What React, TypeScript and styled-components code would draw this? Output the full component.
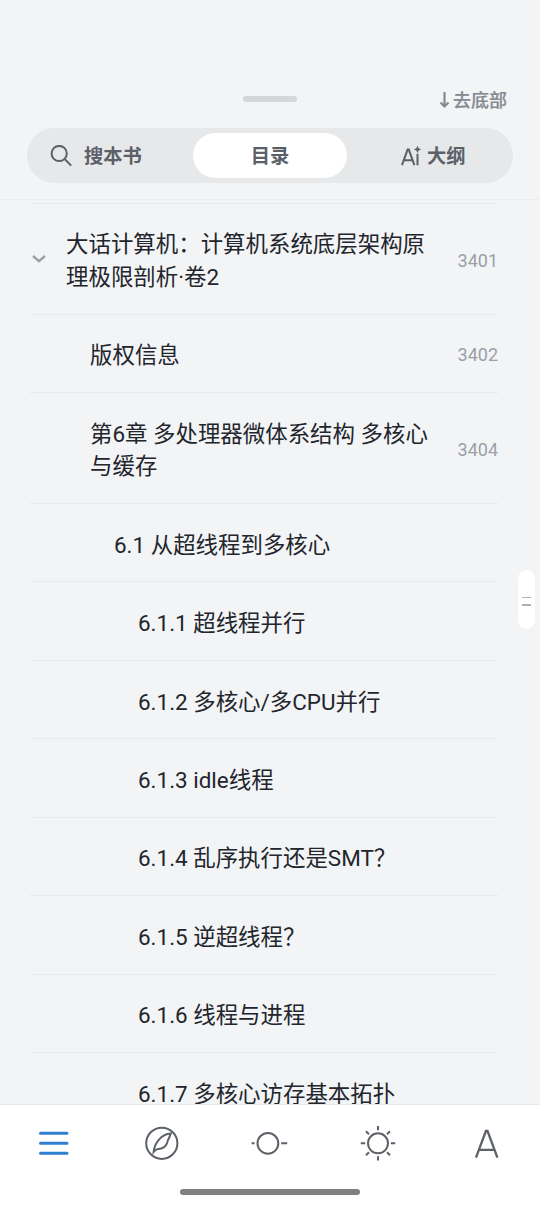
import React from 'react';
import styled, { createGlobalStyle } from 'styled-components';

const GlobalStyle = createGlobalStyle`
  * { box-sizing: border-box; }
  html, body { margin: 0; padding: 0; }
  body {
    background: #f3f4f6;
    font-family: Roboto, "Noto Sans CJK SC", sans-serif;
    -webkit-font-smoothing: antialiased;
  }
`;

const Screen = styled.div`
  position: relative;
  display: flex;
  flex-direction: column;
  width: 540px;
  height: 1206px;
  overflow: hidden;
  background: #f3f4f6;
`;

const Header = styled.header`
  flex: none;
  height: 200px;
  padding: 85px 27px 0;
  border-bottom: 1px solid #ebecee;
`;

const TopBar = styled.div`
  display: grid;
  grid-template-columns: 1fr 54px 1fr;
  align-items: center;
  height: 28px;
`;

const Grabber = styled.span`
  grid-column: 2;
  height: 6px;
  margin-top: -2px;
  border-radius: 3px;
  background: #d5d6d8;
`;

const ToBottom = styled.button`
  justify-self: end;
  display: flex;
  align-items: center;
  gap: 3px;
  margin: 0 6px 0 0;
  padding: 0;
  border: 0;
  background: none;
  color: #858a92;
  font: 500 18px/28px Roboto, "Noto Sans CJK SC", sans-serif;
  -webkit-text-stroke: 0.2px currentColor;
`;

const ArrowIcon = styled.svg`
  width: 11px;
  height: 18px;
  margin-top: -1px;
`;

const Tabs = styled.nav`
  display: grid;
  grid-template-columns: 166px 154px 1fr;
  grid-template-rows: 45px;
  height: 55px;
  margin-top: 15px;
  padding: 5px 0;
  border-radius: 28px;
  background: #e7e8ea;
`;

const Tab = styled.button<{ $active?: boolean; $inset?: number; $gap?: number }>`
  display: flex;
  align-items: center;
  justify-content: ${(p) => (p.$active ? 'center' : 'flex-start')};
  gap: ${(p) => p.$gap ?? 0}px;
  padding: 0 0 0 ${(p) => p.$inset ?? 0}px;
  border: 0;
  border-radius: 23px;
  background: ${(p) => (p.$active ? '#fff' : 'transparent')};
  color: #5b6069;
  font: 700 19.3px/30px Roboto, "Noto Sans CJK SC", sans-serif;
`;

const TabLabel = styled.span`
  padding-top: 2px;
`;

const List = styled.main`
  flex: 1;
  min-height: 0;
  overflow: hidden;
  padding: 2.6px 42px 0 30px;
`;

const Row = styled.div<{ $level: number }>`
  display: flex;
  align-items: center;
  padding: 24.6px 0 20.38px ${(p) => 36 + p.$level * 24}px;
  border-top: 1px solid #e8e9ec;
`;

const Title = styled.span`
  width: 0;
  flex: 1;
  margin-right: 24px;
  color: #22252c;
  font-size: 22.45px;
  line-height: 32.5px;
`;

const PageNumber = styled.span`
  flex: none;
  width: 42px;
  text-align: right;
  color: #9b9fa8;
  font-size: 18px;
  line-height: 24px;
`;

const Chevron = styled.svg`
  flex: none;
  width: 18px;
  height: 12px;
  margin: -3px 18px 0 -36px;
`;

const Footer = styled.footer`
  flex: none;
  display: flex;
  flex-direction: column;
  align-items: center;
  height: 102px;
  border-top: 1px solid #e7e8ea;
  background: #fff;
`;

const Tools = styled.nav`
  display: flex;
  justify-content: space-between;
  width: 100%;
  padding: 18px 34px 0 32px;
`;

const ToolIcon = styled.svg`
  width: 40px;
  height: 40px;
  fill: none;
  stroke: #5d6168;
  stroke-width: 2;
  overflow: visible;
`;

const HomeBar = styled.span`
  width: 180px;
  height: 6px;
  margin-top: 26px;
  border-radius: 3px;
  background: #808080;
`;

const ScrollThumb = styled.div`
  position: absolute;
  top: 570px;
  left: 518px;
  display: flex;
  flex-direction: column;
  align-items: center;
  justify-content: center;
  gap: 6px;
  width: 17px;
  height: 59px;
  padding-top: 3px;
  border-radius: 8.5px;
  background: #fff;
`;

const ThumbLine = styled.span`
  width: 9px;
  height: 1.5px;
  background: #adb0b4;
`;

const chapters: { level: number; title: string; page?: number; open?: boolean }[] = [
  { level: 0, title: '大话计算机：计算机系统底层架构原理极限剖析·卷2', page: 3401, open: true },
  { level: 1, title: '版权信息', page: 3402 },
  { level: 1, title: '第6章 多处理器微体系结构 多核心与缓存', page: 3404 },
  { level: 2, title: '6.1 从超线程到多核心' },
  { level: 3, title: '6.1.1 超线程并行' },
  { level: 3, title: '6.1.2 多核心/多CPU并行' },
  { level: 3, title: '6.1.3 idle线程' },
  { level: 3, title: '6.1.4 乱序执行还是SMT？' },
  { level: 3, title: '6.1.5 逆超线程？' },
  { level: 3, title: '6.1.6 线程与进程' },
  { level: 3, title: '6.1.7 多核心访存基本拓扑' },
];

export default function App() {
  return (
    <Screen>
      <GlobalStyle />
      <Header>
        <TopBar>
          <Grabber />
          <ToBottom>
            <ArrowIcon viewBox="0 0 11 18" fill="none" stroke="currentColor" strokeWidth="2.2">
              <path d="M5.5 1v14.5M1.5 11.5l4 4 4-4" />
            </ArrowIcon>
            <TabLabel>去底部</TabLabel>
          </ToBottom>
        </TopBar>
        <Tabs>
          <Tab $inset={23} $gap={12}>
            <svg width="22" height="22" viewBox="0 0 22 22" fill="none" stroke="currentColor" strokeWidth="2">
              <circle cx="9.2" cy="8.5" r="7.6" />
              <path d="M14.6 14l6.6 6.6" />
            </svg>
            <TabLabel>搜本书</TabLabel>
          </Tab>
          <Tab $active>
            <TabLabel>目录</TabLabel>
          </Tab>
          <Tab $inset={54} $gap={6}>
            <svg width="20" height="22" viewBox="0 0 20 22" fill="none" stroke="currentColor" strokeWidth="2">
              <path d="M1 20.2L6.600 4.600h1.200l5.600 15.600M3.200 15.200h8M16.500 8.800v11.400" />
              <path
                d="M16.5 0.600l1.100 2.700 2.700 1.100-2.700 1.100-1.100 2.700-1.100-2.700-2.700-1.100 2.700-1.100z"
                fill="currentColor"
                stroke="none"
              />
            </svg>
            <TabLabel>大纲</TabLabel>
          </Tab>
        </Tabs>
      </Header>

      <List>
        {chapters.map((c) => (
          <Row key={c.title} $level={c.level}>
            {c.open && (
              <Chevron viewBox="0 0 18 12" fill="none" stroke="#9b9fa8" strokeWidth="2.4">
                <path d="M3 3l6 5.2L15 3" />
              </Chevron>
            )}
            <Title>{c.title}</Title>
            <PageNumber>{c.page}</PageNumber>
          </Row>
        ))}
      </List>

      <Footer>
        <Tools>
          <ToolIcon viewBox="0 0 40 40">
            <g stroke="#2f80cf" strokeWidth="3" strokeLinecap="round">
              <path d="M8.5 10.3h26.5M8.5 20.3h26.5M8.5 30.3h26.5" />
            </g>
          </ToolIcon>
          <ToolIcon viewBox="0 0 40 40">
            <circle cx="20.8" cy="20.3" r="15.6" />
            <path d="M12.6 28.8C13.6 20.5 19.5 11.3 29.8 10.6C28.8 12.5 28.4 15.2 26.9 17.2C26.4 18 26.6 19 26.1 20.2C24.6 24 21.5 25.8 17.2 26C15.2 26.2 14 27 12.6 28.8z" />
          </ToolIcon>
          <ToolIcon viewBox="0 0 40 40">
            <circle cx="18.9" cy="20.3" r="10.4" />
            <path d="M2.6 20.3h3M32.2 20.3h6" />
          </ToolIcon>
          <ToolIcon viewBox="0 0 40 40">
            <circle cx="20" cy="20.3" r="10" />
            <path d="M20 3v4.2M20 33.2v4.3M2.8 20.3h4.4M32.8 20.3h4.4M8 8.2l3 3M32 8.2l-3 3M8 32.2l3-3M32 32.2l-3-3" />
          </ToolIcon>
          <ToolIcon viewBox="0 0 40 40">
            <path strokeWidth="2.3" d="M10 34.6L19.9 8h1.6L31.4 34.6M13.8 26.8h13.8" />
          </ToolIcon>
        </Tools>
        <HomeBar />
      </Footer>

      <ScrollThumb>
        <ThumbLine />
        <ThumbLine />
      </ScrollThumb>
    </Screen>
  );
}
